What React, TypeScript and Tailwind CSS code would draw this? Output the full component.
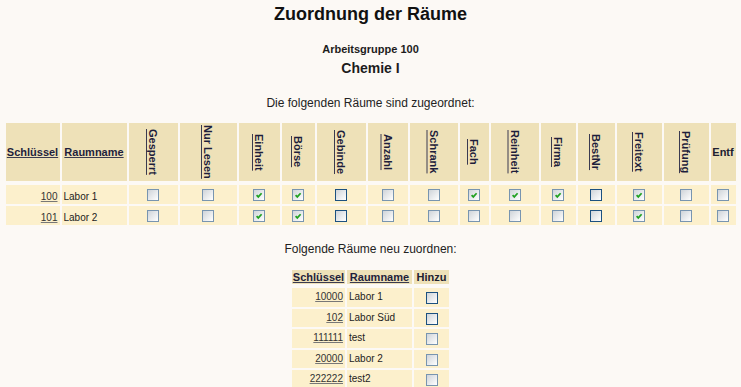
import React from "react";

type Tone = "mid" | "dark";

function Box({ checked, tone = "mid" }: { checked?: boolean; tone?: Tone }) {
  return (
    <span
      className={`relative mx-auto mt-[4px] block h-[12px] w-[12px] border bg-linear-to-br from-[#cfd4d9] to-[#ffffff] ${
        tone === "dark" ? "border-[#1c5180]" : "border-[#7895b0]"
      }`}
    >
      {checked && (
        <svg viewBox="0 0 10 10" className="absolute inset-0 h-full w-full">
          <path d="M2.6 5.1 L4.3 6.9 L7.6 3.2" fill="none" stroke="#21a121" strokeWidth="1.7" />
        </svg>
      )}
    </span>
  );
}

const cols: { label: string; w: string; tone?: Tone }[] = [
  { label: "Gesperrt", w: "w-[49px]" },
  { label: "Nur Lesen", w: "w-[57px]" },
  { label: "Einheit", w: "w-[41px]" },
  { label: "Börse", w: "w-[33px]" },
  { label: "Gebinde", w: "w-[49px]", tone: "dark" },
  { label: "Anzahl", w: "w-[40px]" },
  { label: "Schrank", w: "w-[48px]" },
  { label: "Fach", w: "w-[29px]" },
  { label: "Reinheit", w: "w-[48px]" },
  { label: "Firma", w: "w-[35px]" },
  { label: "BestNr", w: "w-[37px]", tone: "dark" },
  { label: "Freitext", w: "w-[45px]" },
  { label: "Prüfung", w: "w-[45px]" },
];

const assigned = [
  { key: "100", name: "Labor 1", checks: [false, false, true, true, false, false, false, true, true, true, false, true, false] },
  { key: "101", name: "Labor 2", checks: [false, false, true, true, false, false, false, false, false, false, false, true, false] },
];

const unassigned = [
  { key: "10000", name: "Labor 1", tone: "dark" as Tone },
  { key: "102", name: "Labor Süd", tone: "dark" as Tone },
  { key: "111111", name: "test", tone: "mid" as Tone },
  { key: "20000", name: "Labor 2", tone: "mid" as Tone },
  { key: "222222", name: "test2", tone: "mid" as Tone },
];

const th =
  "bg-[#eee1b8] bg-clip-padding border-b-2 border-[#fcf9f5] p-0 text-center align-middle text-[11px] leading-[12px]";
const hlink = "font-bold text-[11px] leading-[12px] text-[#1e1e3c] underline decoration-[#3a3a50]";
const td = "bg-[#fcf0cc] p-0 align-top text-[10px] leading-[10px]";
const dlink = "text-[#333] underline decoration-[#777]";

export default function App() {
  return (
    <div className="h-screen overflow-hidden bg-[#fcf9f5] font-['Liberation_Sans',Arial,sans-serif] text-[#1c1c1c]">
      <div className="pt-[5px] text-center text-[18px] font-bold leading-none text-[#111]">Zuordnung der Räume</div>
      <div className="mt-[21px] text-center text-[11px] font-bold leading-none">Arbeitsgruppe 100</div>
      <div className="mt-[6px] text-center text-[14px] font-bold leading-none">Chemie I</div>
      <div className="mt-[22px] text-center text-[12px] leading-none text-[#222]">
        Die folgenden Räume sind zugeordnet:
      </div>

      <table className="mx-auto mt-[12px] w-[734px] table-fixed border-separate border-spacing-[2px]">
        <thead>
          <tr>
            <th className={`${th} h-[60px] w-[54px]`}>
              <a className={hlink}>Schlüssel</a>
            </th>
            <th className={`${th} h-[60px] w-[65px]`}>
              <a className={hlink}>Raumname</a>
            </th>
            {cols.map((c) => (
              <th key={c.label} className={`${th} h-[60px] ${c.w}`}>
                <a className={`${hlink} inline-block align-middle [writing-mode:vertical-rl]`}>{c.label}</a>
              </th>
            ))}
            <th className={`${th} h-[60px] w-[25px]`}>
              <span className="font-bold text-[#202030]">Entf</span>
            </th>
          </tr>
        </thead>
        <tbody>
          {assigned.map((r) => (
            <tr key={r.key}>
              <td className={`${td} h-[19px] px-[2px] pt-[7px] text-right`}>
                <a className={dlink}>{r.key}</a>
              </td>
              <td className={`${td} h-[19px] px-[2px] pt-[7px]`}>{r.name}</td>
              {r.checks.map((c, i) => (
                <td key={i} className={`${td} h-[19px]`}>
                  <Box checked={c} tone={cols[i].tone} />
                </td>
              ))}
              <td className={`${td} h-[19px]`}>
                <Box />
              </td>
            </tr>
          ))}
        </tbody>
      </table>

      <div className="mt-[16px] text-center text-[12px] leading-none text-[#222]">Folgende Räume neu zuordnen:</div>

      <table className="mx-auto mt-[13px] w-[161px] table-fixed border-separate border-spacing-[2px]">
        <thead>
          <tr>
            <th className={`${th} h-[16px] w-[53px]`}>
              <a className={hlink}>Schlüssel</a>
            </th>
            <th className={`${th} h-[16px] w-[65px]`}>
              <a className={hlink}>Raumname</a>
            </th>
            <th className={`${th} h-[16px] w-[35px]`}>
              <span className="font-bold text-[#202030]">Hinzu</span>
            </th>
          </tr>
        </thead>
        <tbody>
          {unassigned.map((r) => (
            <tr key={r.key}>
              <td className={`${td} h-[18.5px] px-[2px] pt-[4px] text-right`}>
                <a className={dlink}>{r.key}</a>
              </td>
              <td className={`${td} h-[18.5px] px-[2px] pt-[4px]`}>{r.name}</td>
              <td className={`${td} h-[18.5px]`}>
                <Box tone={r.tone} />
              </td>
            </tr>
          ))}
        </tbody>
      </table>
    </div>
  );
}
